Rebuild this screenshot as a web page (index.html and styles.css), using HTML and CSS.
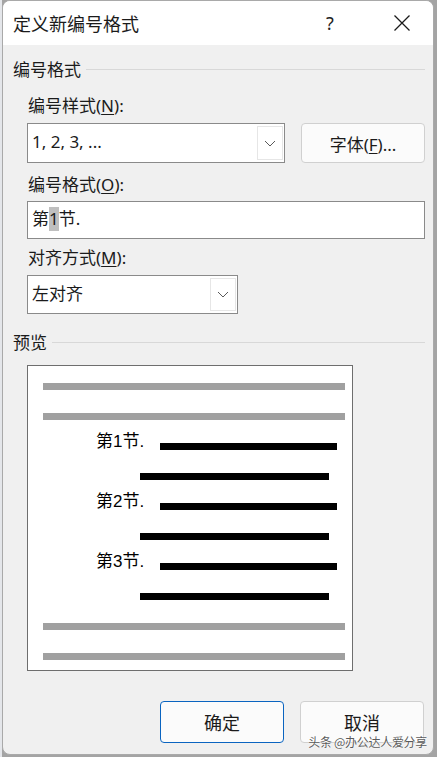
FILE: index.html
```html
<!DOCTYPE html>
<html lang="zh-CN">
<head>
<meta charset="utf-8">
<title>定义新编号格式</title>
<link rel="stylesheet" href="styles.css">
</head>
<body>
<div class="dialog">
  <div class="titlebar">
    <span class="title">定义新编号格式</span>
    <span class="help">?</span>
    <svg class="close" width="18" height="18" viewBox="0 0 18 18"><path d="M1.5 1.5 L16.5 16.5 M16.5 1.5 L1.5 16.5" stroke="#1a1a1a" stroke-width="1.3" fill="none"/></svg>
  </div>
  <div class="content">
    <div class="section-head"><span>编号格式</span><span class="rule"></span></div>
    <div class="label l1">编号样式(<u>N</u>):</div>
    <div class="row">
      <div class="combo combo-wide">
        <span class="combo-text">1, 2, 3, ...</span>
        <span class="drop"><svg width="12" height="7" viewBox="0 0 12 7"><path d="M1 1 L6 6 L11 1" stroke="#5a5a5a" stroke-width="1" fill="none"/></svg></span>
      </div>
      <button class="btn btn-font">字体(<u>F</u>)...</button>
    </div>
    <div class="label l2">编号格式(<u>O</u>):</div>
    <div class="textbox">第<span class="sel">1</span>节.</div>
    <div class="label l3">对齐方式(<u>M</u>):</div>
    <div class="combo combo-narrow">
      <span class="combo-text">左对齐</span>
      <span class="drop"><svg width="12" height="7" viewBox="0 0 12 7"><path d="M1 1 L6 6 L11 1" stroke="#5a5a5a" stroke-width="1" fill="none"/></svg></span>
    </div>
    <div class="section-head preview-head"><span>预览</span><span class="rule"></span></div>
    <div class="preview">
      <div class="bar gray"></div>
      <div class="bar gray"></div>
      <div class="item"><span class="num">第1节.</span><span class="bar black first"></span></div>
      <div class="item"><span class="bar black second"></span></div>
      <div class="item"><span class="num">第2节.</span><span class="bar black first"></span></div>
      <div class="item"><span class="bar black second"></span></div>
      <div class="item"><span class="num">第3节.</span><span class="bar black first"></span></div>
      <div class="item"><span class="bar black second"></span></div>
      <div class="bar gray"></div>
      <div class="bar gray"></div>
    </div>
    <div class="actions">
      <button class="btn btn-ok">确定</button>
      <button class="btn">取消</button>
    </div>
  </div>
  <div class="watermark">头条 @办公达人爱分享</div>
</div>
</body>
</html>
```

FILE: styles.css
```css
html, body {
  margin: 0;
  padding: 0;
}
body {
  width: 437px;
  height: 757px;
  overflow: hidden;
  background: linear-gradient(to right, #e4e6ea 0, #e4e6ea 2px, #a4a4a4 2px);
  font-family: "Noto Sans", "Noto Sans CJK SC", sans-serif;
  color: #1b1b1b;
}
.dialog {
  position: relative;
  box-sizing: border-box;
  margin-left: 2px;
  width: 432px;
  height: 755px;
  background: #f0f0f0;
  border: 1px solid #a9a9a9;
  border-radius: 8px;
  overflow: hidden;
}
.titlebar {
  height: 44px;
  background: #ffffff;
  display: flex;
  align-items: center;
  padding-left: 10px;
}
.title {
  font-size: 18px;
  line-height: 24px;
  flex: 1;
  font-family: "Noto Sans CJK SC", sans-serif;
}
.help {
  font-size: 18px;
  line-height: 24px;
  width: 20px;
  margin-right: 47px;
  color: #222;
}
.close {
  margin-right: 22px;
}
.content {
  padding: 13px 8px 0 10px;
}
.section-head {
  display: flex;
  align-items: center;
  gap: 5px;
  font-size: 17px;
  line-height: 24px;
}
.section-head .rule {
  flex: 1;
  height: 1px;
  background: #d8d8d8;
  margin-top: -1px;
}
.label {
  margin-left: 15px;
  font-size: 17px;
  line-height: 24px;
}
.l1 { margin-top: 12px; }
.l2 { margin-top: 10px; }
.l3 { margin-top: 7px; }
u { text-underline-offset: 2px; }
.row {
  margin-top: 5px;
  margin-left: 14px;
  display: flex;
  gap: 16px;
}
.combo {
  box-sizing: border-box;
  display: flex;
  align-items: stretch;
  background: #fff;
  border: 1px solid #8a8a8a;
}
.combo-wide {
  width: 258px;
  height: 40px;
}
.combo-narrow {
  margin-top: 5px;
  margin-left: 14px;
  width: 211px;
  height: 39px;
}
.combo-text {
  flex: 1;
  font-size: 17px;
  line-height: 36px;
  padding-left: 4px;
}
.drop {
  box-sizing: border-box;
  width: 26px;
  margin: 2px 1px 2px 0;
  border: 1px solid #e6e6e6;
  background: #fff;
  display: flex;
  align-items: center;
  justify-content: center;
}
.btn {
  box-sizing: border-box;
  width: 124px;
  height: 40px;
  background: #fbfbfb;
  border: 1px solid #d0d0d0;
  border-radius: 4px;
  font-family: "Noto Sans", "Noto Sans CJK SC", sans-serif;
  font-size: 17px;
  color: #1b1b1b;
  padding: 0;
}
.textbox {
  box-sizing: border-box;
  margin-top: 4px;
  margin-left: 14px;
  height: 38px;
  background: #fff;
  border: 1px solid #8a8a8a;
  font-size: 17px;
  line-height: 30px;
  padding: 2px 4px;
}
.sel {
  background: #bfbfbf;
  display: inline-block;
  line-height: 24px;
}
.preview-head {
  margin-top: 17px;
}
.preview {
  box-sizing: border-box;
  margin-top: 10px;
  margin-left: 14px;
  width: 326px;
  height: 306px;
  background: #fff;
  border: 1px solid #6e6e6e;
  padding: 17px 0 0 15px;
  display: flex;
  flex-direction: column;
  gap: 23px;
}
.bar {
  display: block;
  height: 7px;
}
.gray {
  width: 302px;
  background: #a0a0a0;
}
.item {
  height: 7px;
  display: flex;
  align-items: center;
}
.num {
  width: 64px;
  margin-left: 53px;
  margin-bottom: 10px;
  font-family: "Liberation Sans", "Noto Sans CJK SC", sans-serif;
  font-size: 17px;
  line-height: 20px;
  color: #000;
}
.black {
  background: #000;
}
.first {
  width: 177px;
}
.second {
  width: 189px;
  margin-left: 97px;
}
.actions {
  margin-top: 30px;
  display: flex;
  justify-content: flex-end;
  gap: 16px;
  padding-right: 1px;
}
.actions .btn {
  height: 42px;
  font-size: 18px;
}
.btn-ok {
  border: 1px solid #0a64c0;
}
.watermark {
  position: absolute;
  right: 6px;
  bottom: 5px;
  font-family: "Noto Sans CJK SC", sans-serif;
  font-size: 12px;
  line-height: 14px;
  color: rgba(60, 60, 60, 0.85);
  text-shadow: 0 0 2px #fff, 0 0 1px #fff;
  letter-spacing: -0.3px;
}
```
